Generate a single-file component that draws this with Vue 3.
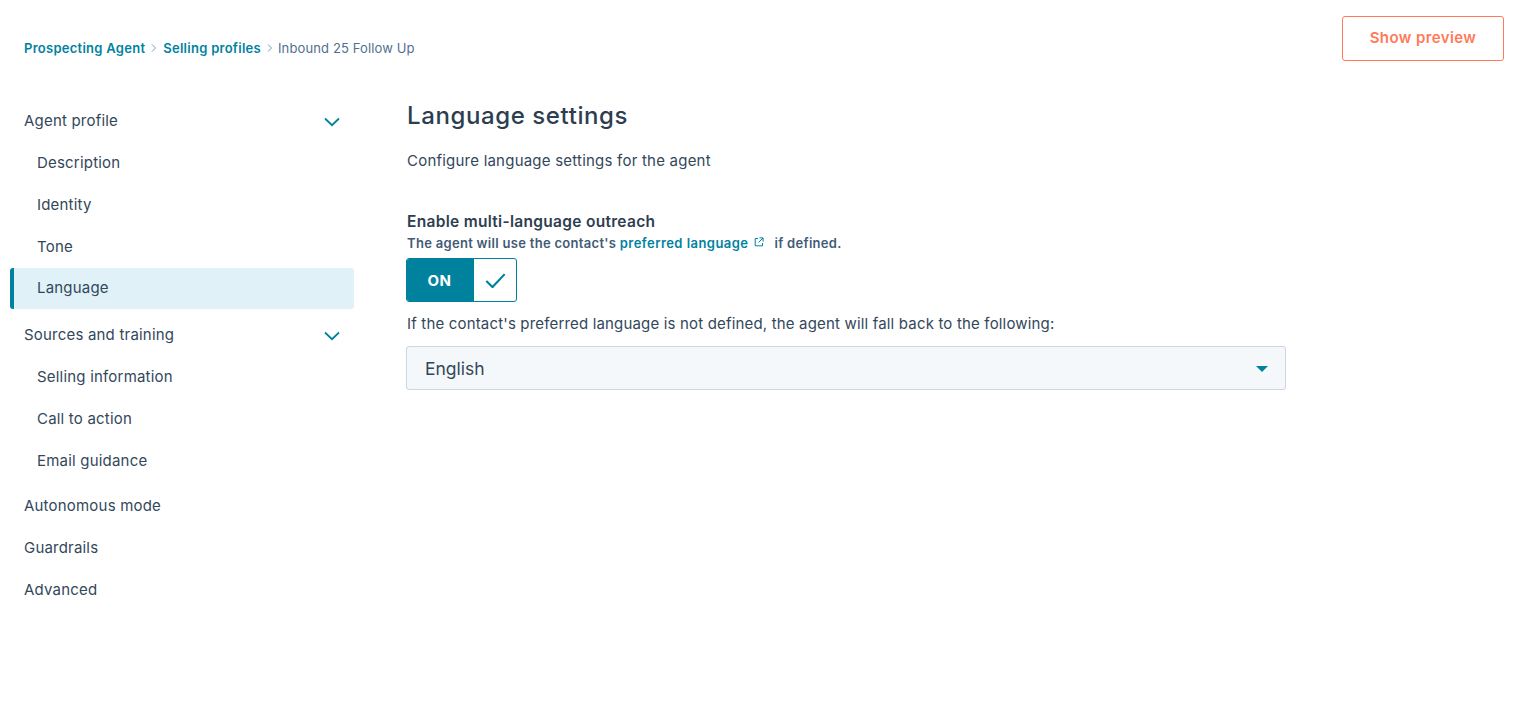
<script setup>
const groups = [
  { label: 'Agent profile', chevron: true, items: ['Description', 'Identity', 'Tone', 'Language'] },
  { label: 'Sources and training', chevron: true, items: ['Selling information', 'Call to action', 'Email guidance'] },
  { label: 'Autonomous mode', items: [] },
  { label: 'Guardrails', items: [] },
  { label: 'Advanced', items: [] },
]
</script>

<template>
  <div class="page">
    <header class="top">
      <nav class="crumbs">
        <a class="crumb-link">Prospecting Agent</a>
        <svg class="crumb-sep" viewBox="0 0 8 10"><path d="M2 1.5 5.5 5 2 8.5" /></svg>
        <a class="crumb-link">Selling profiles</a>
        <svg class="crumb-sep" viewBox="0 0 8 10"><path d="M2 1.5 5.5 5 2 8.5" /></svg>
        <span class="crumb-current">Inbound 25 Follow Up</span>
      </nav>
      <button class="preview">Show preview</button>
    </header>

    <div class="body">
      <aside class="side">
        <section v-for="g in groups" :key="g.label" class="group" :class="{ 'has-items': g.items.length }">
          <div class="row head">
            <span>{{ g.label }}</span>
            <svg v-if="g.chevron" class="chev" viewBox="0 0 16 10"><path d="M1 1.5 8 8.2 15 1.5" /></svg>
          </div>
          <div
            v-for="i in g.items"
            :key="i"
            class="row sub"
            :class="{ active: i === 'Language' }"
          >{{ i }}</div>
        </section>
      </aside>

      <main class="main">
        <h1 class="title">Language settings</h1>
        <p class="intro">Configure language settings for the agent</p>

        <h2 class="label">Enable multi-language outreach</h2>
        <p class="help">
          The agent will use the contact's
          <a class="help-link">preferred language</a>
          <svg class="ext" viewBox="0 0 10 10"><path d="M4 1.5H1.2v7.3h7.3V6M5.5.9h3.6v3.6M9 1 4.6 5.4" /></svg>
          <span class="help-end">if defined.</span>
        </p>

        <div class="toggle">
          <span class="toggle-on">ON</span>
          <span class="toggle-box">
            <svg viewBox="0 0 22 16"><path d="M1.2 8.6 7.8 15 20.8 1.2" /></svg>
          </span>
        </div>

        <p class="fallback">If the contact's preferred language is not defined, the agent will fall back to the following:</p>

        <div class="select">
          <span>English</span>
          <span class="caret"></span>
        </div>
      </main>
    </div>
  </div>
</template>

<style>
html, body { margin: 0; background: #fff; }
</style>

<style scoped>
.page {
  height: 721px;
  box-sizing: border-box;
  padding: 16px 28px 0 10px;
  font-family: Inter, "Noto Sans", sans-serif;
  color: #33475b;
  overflow: hidden;
}
.top {
  display: flex;
  justify-content: space-between;
  align-items: flex-start;
  height: 45px;
}
.crumbs {
  display: flex;
  align-items: center;
  gap: 5px;
  margin: 23px 0 0 14px;
  height: 18px;
  font-size: 13px;
  line-height: 18px;
}
.crumb-link { color: #00829f; font-weight: 600; letter-spacing: .27px; }
.crumb-current { color: #516f90; letter-spacing: .13px; margin-left: -1px; }
.crumb-sep { width: 8px; height: 10px; fill: none; stroke: #7c98b6; stroke-width: 1; }
.preview {
  width: 162px;
  height: 45px;
  padding: 0 0 3px;
  border: 1px solid #ff7a59;
  border-radius: 3px;
  background: #fff;
  color: #ff7a59;
  font: 600 15px Inter, "Noto Sans", sans-serif;
  letter-spacing: .4px;
}
.body {
  display: flex;
  margin-top: 39px;
}
.side { width: 344px; flex: none; }
.group.has-items { margin-bottom: 3px; }
.group:first-child { margin-bottom: 5px; }
.row {
  display: flex;
  align-items: center;
  justify-content: space-between;
  height: 42px;
  box-sizing: border-box;
  padding-bottom: 2px;
  font-size: 15px;
  letter-spacing: .2px;
  color: #33475b;
}
.head { padding-left: 14px; padding-right: 14px; }
.sub { padding-left: 27px; }
.chev { width: 16px; height: 10px; margin-top: 3px; fill: none; stroke: #00829f; stroke-width: 1.8; }
.active {
  height: 41px;
  padding-left: 23px;
  padding-bottom: 2px;
  background: #e0f2f7;
  border-left: 4px solid #00829f;
  border-radius: 3px;
}
.main { margin-left: 52px; flex: none; width: 880px; }
.title, .intro, .label, .help, .fallback { padding-left: 1px; }
.title {
  margin: 0;
  font-size: 24px;
  line-height: 32px;
  font-weight: 500;
  letter-spacing: .6px;
  color: #2d3e50;
}
.intro {
  margin: 19px 0 0;
  font-size: 15px;
  line-height: 20px;
  letter-spacing: .22px;
}
.label {
  margin: 41px 0 0;
  font-size: 15.5px;
  line-height: 20px;
  font-weight: 600;
  letter-spacing: .3px;
  color: #2d3e50;
}
.help {
  margin: 2px 0 0;
  font-size: 13px;
  line-height: 18px;
  font-weight: 600;
  letter-spacing: .3px;
  color: #425b76;
}
.help-link { color: #00829f; letter-spacing: .45px; }
.ext { width: 10px; height: 10px; fill: none; stroke: #00829f; stroke-width: 1; margin: 0 10px 4px 6px; vertical-align: middle; }
.toggle {
  display: flex;
  width: 111px;
  height: 44px;
  margin-top: 6px;
  box-sizing: border-box;
  border: 1px solid #00829f;
  border-radius: 3px;
  overflow: hidden;
}
.toggle-on {
  width: 67px;
  box-sizing: border-box;
  padding-right: 2px;
  background: #00829f;
  color: #fff;
  font-size: 15px;
  font-weight: 700;
  letter-spacing: .5px;
  display: flex;
  align-items: center;
  justify-content: center;
}
.toggle-box {
  flex: 1;
  display: flex;
  align-items: center;
  justify-content: center;
  padding-top: 1px;
}
.toggle-box svg { width: 21px; height: 15px; fill: none; stroke: #00829f; stroke-width: 2.3; }
.fallback {
  margin: 12px 0 0;
  font-size: 15px;
  line-height: 20px;
  letter-spacing: .17px;
}
.select {
  display: flex;
  align-items: center;
  justify-content: space-between;
  margin-top: 12px;
  width: 100%;
  height: 44px;
  box-sizing: border-box;
  padding: 1px 17px 0 18px;
  background: #f5f8fa;
  border: 1px solid #cbd6e2;
  border-radius: 3px;
  font-size: 17.5px;
}
.caret {
  width: 0;
  height: 0;
  border-left: 6px solid transparent;
  border-right: 6px solid transparent;
  border-top: 6px solid #00829f;
}
</style>
